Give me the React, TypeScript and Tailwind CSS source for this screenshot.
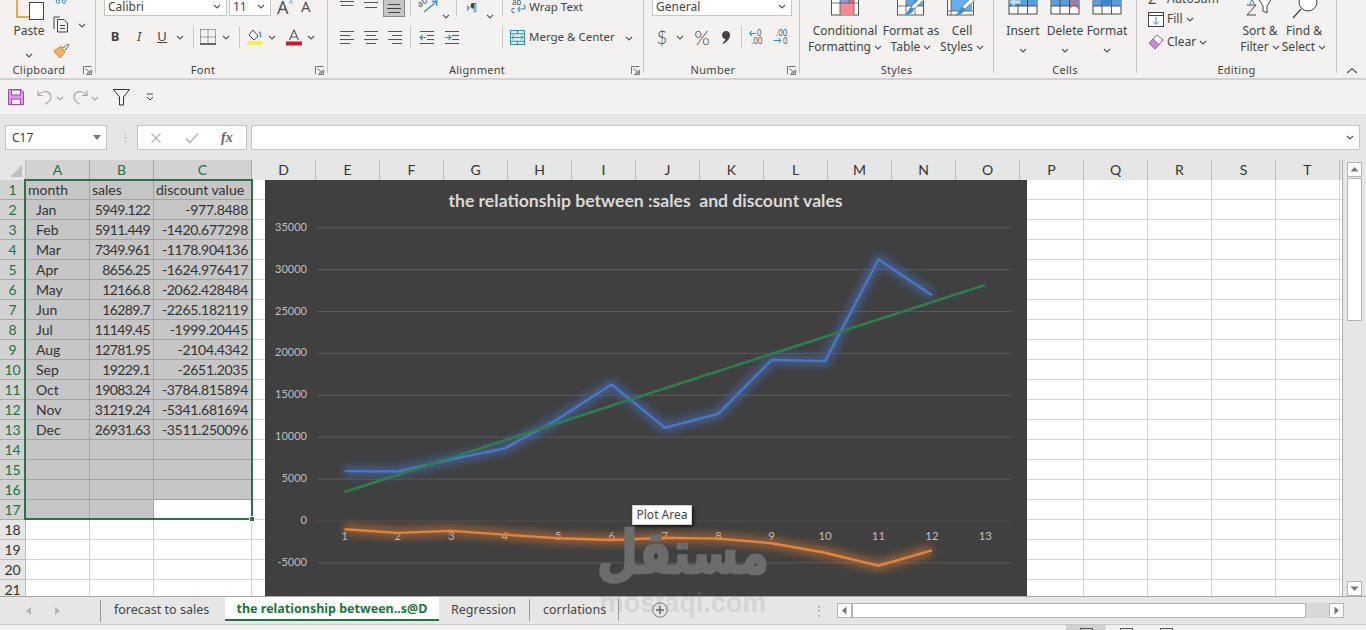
import type { ReactNode } from 'react';

const rows: [string, string, string][] = [
  ['month', 'sales', 'discount value'],
  ['Jan', '5949.122', '-977.8488'],
  ['Feb', '5911.449', '-1420.677298'],
  ['Mar', '7349.961', '-1178.904136'],
  ['Apr', '8656.25', '-1624.976417'],
  ['May', '12166.8', '-2062.428484'],
  ['Jun', '16289.7', '-2265.182119'],
  ['Jul', '11149.45', '-1999.20445'],
  ['Aug', '12781.95', '-2104.4342'],
  ['Sep', '19229.1', '-2651.2035'],
  ['Oct', '19083.24', '-3784.815894'],
  ['Nov', '31219.24', '-5341.681694'],
  ['Dec', '26931.63', '-3511.250096'],
];

const columns = ['D', 'E', 'F', 'G', 'H', 'I', 'J', 'K', 'L', 'M', 'N', 'O', 'P', 'Q', 'R', 'S', 'T'];

const sales = [5949, 5911, 7350, 8656, 12167, 16290, 11149, 12782, 19229, 19083, 31219, 26932];
const discount = [-978, -1421, -1179, -1625, -2062, -2265, -1999, -2104, -2651, -3785, -5342, -3511];

// chart px, relative to chart's top-left corner
const px = (i: number) => 79.5 + i * 53.4;
const py = (v: number) => 341 - v * 0.00838;
const linePoints = (vals: number[]) => vals.map((v, i) => `${px(i)},${py(v)}`).join(' ');

const Slot = ({ className = '', children }: { className?: string; children?: ReactNode }) => (
  <div className={`flex shrink-0 items-center justify-center ${className}`}>{children}</div>
);

const Chev = () => (
  <svg width="8" height="5" viewBox="0 0 8 5" className="inline-block shrink-0">
    <path d="M1 1 L4 4 L7 1" fill="none" stroke="#555" strokeWidth="1.1" />
  </svg>
);

const Sep = () => <div className="h-[22px] w-px bg-[#c8c6c4]" />;

const Launcher = () => (
  <svg width="9" height="9" viewBox="0 0 9 9" className="ml-[5px] mr-[3px] shrink-0">
    <path d="M0.5 8 V0.5 H8.5 M3 8.5 H8.5 V4 M2.5 2.5 L7 7 M7 4 V7 H4" fill="none" stroke="#666" strokeWidth="0.9" />
  </svg>
);

const Group = ({
  className,
  label,
  launcher,
  children,
}: {
  className: string;
  label: string;
  launcher?: boolean;
  children: ReactNode;
}) => (
  <div className={`flex h-[73px] shrink-0 flex-col border-r border-[#c4c4c4] ${className}`}>
    <div className="h-[64px] shrink-0 overflow-hidden">{children}</div>
    <div className="flex h-[12px] shrink-0 items-center text-[11px] leading-[12px] tracking-[0.3px] text-[#444]">
      <span className="flex-1 text-center">{label}</span>
      {launcher && <Launcher />}
    </div>
  </div>
);

const Lines = ({ rowsY, xs }: { rowsY: number[]; xs: [number, number][] }) => (
  <svg width="16" height="15" viewBox="0 0 16 15">
    {rowsY.map((y, i) => (
      <line key={i} x1={xs[i][0]} x2={xs[i][1]} y1={y} y2={y} stroke="#555" strokeWidth="1" />
    ))}
  </svg>
);

const TableIcon = ({ kind }: { kind: 'insert' | 'delete' | 'format' }) => (
  <svg width="30" height="15" viewBox="0 0 30 15">
    <rect x="1" y="-3" width="28" height="17" fill="#fff" stroke="#444" />
    <rect x="1" y="-3" width="28" height="9" fill="#5a9bd8" />
    <path d="M1 6 H29 M10 -3 V14 M19.5 -3 V14" stroke="#444" strokeWidth="0.9" fill="none" />
    {kind === 'insert' && (
      <path d="M1 2 L7 -3 V0 H13 V4 H7 V7 Z" fill="#bfe3f5" stroke="#4aa0d6" strokeWidth="0.9" />
    )}
    {kind === 'delete' && <path d="M19 -2 L29 9 M29 -2 L19 9" stroke="#e0605a" strokeWidth="1.4" />}
    {kind === 'format' && <rect x="10" y="-3" width="9.5" height="9" fill="#3f86cf" />}
  </svg>
);

const Brush = () => (
  <g>
    <path d="M27 -4 L31 -2 L19 9 L16 7 Z" fill="#fff" stroke="#7a7a7a" strokeWidth="0.8" />
    <path d="M16 7 L19 9 C18 13 14 15 9 15 C13 13 13 9 16 7 Z" fill="#3f8fc8" />
  </g>
);

const Clipboard = () => (
  <svg width="30" height="21" viewBox="0 0 30 21">
    <path d="M1 -2 V17 H13" fill="none" stroke="#e8a94e" strokeWidth="2" />
    <rect x="13.5" y="2.5" width="14" height="17" fill="#fff" stroke="#444" />
  </svg>
);

const Ribbon = () => (
  <div className="flex h-[78px] shrink-0 overflow-hidden bg-[#f3f2f1]">
    <Group className="w-[96px]" label="Clipboard" launcher>
      <div className="flex">
        <div className="ml-[11px] flex w-[36px] flex-col items-center">
          <div className="h-[23px] pl-[3px]">
            <Clipboard />
          </div>
          <span className="text-[12px] leading-[16px] text-[#444]">Paste</span>
          <div className="mt-[3px]">
            <Chev />
          </div>
        </div>
        <div className="ml-[6px] flex flex-col">
          <svg width="12" height="5" viewBox="0 0 12 5" className="ml-[2px]">
            <circle cx="3" cy="1.5" r="1.8" fill="none" stroke="#3b8ec2" />
            <circle cx="9" cy="1.5" r="1.8" fill="none" stroke="#3b8ec2" />
          </svg>
          <div className="mt-[7px] flex items-center">
            <svg width="17" height="17" viewBox="0 0 17 17">
              <path d="M1 13 V1 H7 M4.5 3.5 H11 L14.5 7 V16 H4.5 Z M7 9.5 H12 M7 12.5 H12" fill="none" stroke="#444" strokeWidth="1" />
            </svg>
            <div className="ml-[8px]">
              <Chev />
            </div>
          </div>
          <svg width="17" height="16" viewBox="0 0 17 16" className="mt-[7px]">
            <path d="M1 8 L8 3 L12 9 L7 15 C5 13 2 10 1 8 Z" fill="#eeb26c" stroke="#d98a34" />
            <path d="M10 5 L15 1 L16 2.5 L12 7" fill="#fff" stroke="#555" />
          </svg>
        </div>
      </div>
    </Group>

    <Group className="w-[232px]" label="Font" launcher>
      <div className="-mt-[3px] ml-[8px] flex h-[19px] items-center">
        <div className="flex h-[19px] w-[123px] items-center justify-between border border-[#c6c6c6] bg-white pl-[3px] pr-[5px] text-[12px] text-[#444]">
          Calibri <Chev />
        </div>
        <div className="ml-[2px] flex h-[19px] w-[42px] items-center justify-between border border-[#c6c6c6] bg-white pl-[3px] pr-[5px] text-[12px] text-[#444]">
          11 <Chev />
        </div>
        <span className="ml-[6px] text-[18px] leading-none text-[#555]">A</span>
        <span className="-mt-[8px] text-[8px] leading-none text-[#3b8ec2]">^</span>
        <span className="ml-[8px] text-[15px] leading-none text-[#555]">A</span>
        <span className="-mt-[8px] text-[8px] leading-none text-[#3b8ec2]">ˇ</span>
      </div>
      <div className="mt-[12px] flex h-[18px] items-center pl-[7px] text-[#444]">
        <Slot className="w-[24px] text-[13px] font-bold">B</Slot>
        <Slot className="w-[24px] text-[13px] italic">I</Slot>
        <Slot className="w-[22px] text-[13px] underline">U</Slot>
        <Slot className="w-[14px]">
          <Chev />
        </Slot>
        <Slot className="w-[12px]">
          <Sep />
        </Slot>
        <Slot className="w-[18px]">
          <svg width="16" height="16" viewBox="0 0 16 16">
            <path d="M0.5 0.5 H15.5 V15 H0.5 Z M8 0.5 V15 M0.5 8 H15.5" fill="none" stroke="#555" strokeWidth="1" strokeDasharray="1 1" />
            <path d="M0 15 H16" stroke="#222" strokeWidth="1.2" />
          </svg>
        </Slot>
        <Slot className="w-[18px]">
          <Chev />
        </Slot>
        <Slot className="w-[8px]">
          <Sep />
        </Slot>
        <Slot className="w-[22px]">
          <svg width="17" height="16" viewBox="0 0 17 16">
            <path d="M7 1 L12 7 L8 11 L3 6 Z" fill="#fff" stroke="#444" />
            <path d="M13 3 C15 4 15 7 14 8" fill="none" stroke="#3b8ec2" strokeWidth="1.4" />
            <rect x="1" y="12" width="15.5" height="4" fill="#f6ee5a" />
          </svg>
        </Slot>
        <Slot className="w-[14px]">
          <Chev />
        </Slot>
        <Slot className="w-[30px]">
          <svg width="16" height="17" viewBox="0 0 16 17">
            <path d="M3.5 11 L8 1 L12.5 11 M5 8 H11" fill="none" stroke="#555" strokeWidth="1.1" />
            <rect x="0" y="12.5" width="16" height="4" fill="#c01f28" />
          </svg>
        </Slot>
        <Slot className="w-[4px]">
          <Chev />
        </Slot>
      </div>
    </Group>

    <Group className="w-[316px]" label="Alignment" launcher>
      <div className="flex h-[16px] items-start pl-[11px]">
        <Lines rowsY={[1.5, 5.5]} xs={[[1, 15], [2, 14]]} />
        <div className="ml-[8px]">
          <Lines rowsY={[2.5, 7.5]} xs={[[1, 15], [2, 14]]} />
        </div>
        <div className="ml-[4px] -mt-[4px] flex h-[21px] w-[22px] items-end justify-center border border-[#8a8a8a] bg-[#c6c6c6] pb-[2px]">
          <svg width="14" height="11" viewBox="0 0 14 11">
            <path d="M1 1.5 H13 M0 5.5 H14 M1 9.5 H13" stroke="#444" />
          </svg>
        </div>
        <Slot className="ml-[5px] w-px">
          <div className="h-[16px] w-px bg-[#c8c6c4]" />
        </Slot>
        <svg width="22" height="15" viewBox="0 0 22 15" className="ml-[7px]">
          <text x="1" y="6" fontSize="9" fill="#555" transform="rotate(-35 4 6)">ab</text>
          <path d="M6 12 L18 2 M14 1.5 L19 1 L18.5 6" fill="none" stroke="#3b8ec2" strokeWidth="1.3" />
        </svg>
        <div className="ml-[2px] mt-[3px]">
          <Chev />
        </div>
        <Slot className="ml-[6px] w-px">
          <div className="h-[16px] w-px bg-[#c8c6c4]" />
        </Slot>
        <span className="ml-[9px] text-[11px] font-bold leading-[14px] text-[#3b8ec2]">›</span>
        <span className="text-[11px] leading-[14px] text-[#444]">¶</span>
        <div className="ml-[9px] mt-[3px]">
          <Chev />
        </div>
        <Slot className="ml-[8px] w-px">
          <div className="h-[16px] w-px bg-[#c8c6c4]" />
        </Slot>
        <svg width="15" height="14" viewBox="0 0 15 14" className="ml-[8px]">
          <text x="1" y="5" fontSize="8" fill="#555">ab</text>
          <text x="0" y="13" fontSize="8" fill="#555">c</text>
          <path d="M8 9 H12 C15 9 15 5 12 5 M9 6.5 L7 9 L9 12" fill="none" stroke="#3b8ec2" strokeWidth="1.2" />
        </svg>
        <span className="ml-[3px] text-[11.5px] leading-[13px] text-[#444]">Wrap Text</span>
      </div>
      <div className="mt-[12px] flex h-[18px] items-center pl-[11px]">
        <Lines rowsY={[1.5, 5.5, 9.5, 13.5]} xs={[[1, 15], [1, 11], [1, 15], [1, 11]]} />
        <div className="ml-[8px]">
          <Lines rowsY={[1.5, 5.5, 9.5, 13.5]} xs={[[1, 15], [3, 13], [1, 15], [3, 13]]} />
        </div>
        <div className="ml-[8px]">
          <Lines rowsY={[1.5, 5.5, 9.5, 13.5]} xs={[[1, 15], [5, 15], [1, 15], [5, 15]]} />
        </div>
        <Slot className="ml-[7px] w-px">
          <Sep />
        </Slot>
        <svg width="16" height="15" viewBox="0 0 16 15" className="ml-[8px]">
          <path d="M1 1.5 H15 M8 5.5 H15 M8 9.5 H15 M1 13.5 H15" stroke="#555" />
          <path d="M1 7.5 H7 M3.5 5 L1 7.5 L3.5 10" fill="none" stroke="#3b8ec2" strokeWidth="1.1" />
        </svg>
        <svg width="16" height="15" viewBox="0 0 16 15" className="ml-[9px]">
          <path d="M1 1.5 H15 M8 5.5 H15 M8 9.5 H15 M1 13.5 H15" stroke="#555" />
          <path d="M1 7.5 H7 M4.5 5 L7 7.5 L4.5 10" fill="none" stroke="#3b8ec2" strokeWidth="1.1" />
        </svg>
        <Slot className="ml-[42px] w-px">
          <Sep />
        </Slot>
        <svg width="15" height="15" viewBox="0 0 16 16" className="ml-[7px]">
          <rect x="0.5" y="0.5" width="15" height="15" fill="#d8eef2" stroke="#2c8a9a" />
          <path d="M0 4 H16 M0 12 H16 M8 0 V4 M8 12 V16" stroke="#2c8a9a" />
          <path d="M2 8 H14 M4 6 L2 8 L4 10 M12 6 L14 8 L12 10" fill="none" stroke="#2c8a9a" />
        </svg>
        <span className="ml-[4px] text-[11.5px] text-[#444]">Merge &amp; Center</span>
        <div className="ml-[10px]">
          <Chev />
        </div>
      </div>
    </Group>

    <Group className="w-[156px]" label="Number" launcher>
      <div className="-mt-[3px] ml-[8px] flex h-[19px] w-[140px] items-center justify-between border border-[#c6c6c6] bg-white pl-[3px] pr-[5px] text-[12px] text-[#444]">
        General <Chev />
      </div>
      <div className="mt-[12px] flex h-[18px] items-center text-[#444]">
        <Slot className="ml-[10px] w-[16px] text-[18px] font-['Lato',sans-serif] font-light">$</Slot>
        <Slot className="ml-[2px] w-[16px]">
          <Chev />
        </Slot>
        <Slot className="ml-[4px] w-[20px] font-['Lato',sans-serif] text-[20px] font-light">%</Slot>
        <Slot className="ml-[4px] w-[20px]">
          <svg width="8" height="13" viewBox="0 0 8 13">
            <path d="M4 0 C7 0 8 2 8 4 C8 8 5 11 1 13 L0.5 12 C2.5 10.5 3.5 9 3.5 8 C1.5 8 0 6.5 0 4 C0 2 2 0 4 0 Z" fill="#444" />
          </svg>
        </Slot>
        <Slot className="ml-[5px] w-px">
          <Sep />
        </Slot>
        <svg width="17" height="16" viewBox="0 0 17 16" className="ml-[7px]">
          <path d="M1 4.5 H7 M3 2 L0.5 4.5 L3 7" fill="none" stroke="#3b8ec2" />
          <text x="8" y="7" fontSize="8" fill="#555">0</text>
          <text x="2" y="15" fontSize="8" fill="#555">.00</text>
        </svg>
        <svg width="17" height="16" viewBox="0 0 17 16" className="ml-[7px]">
          <text x="3" y="7" fontSize="8" fill="#555">.00</text>
          <path d="M0.5 11.5 H8 M5.5 9 L8 11.5 L5.5 14" fill="none" stroke="#3b8ec2" />
          <text x="10" y="15" fontSize="8" fill="#555">0</text>
        </svg>
      </div>
    </Group>

    <Group className="w-[194px]" label="Styles">
      <div className="flex pl-[11px] text-center text-[12px] leading-[16px] text-[#444]">
        <div className="flex w-[68px] flex-col items-center">
          <svg width="28" height="23" viewBox="0 0 28 23">
            <rect x="0.5" y="-3" width="27" height="18" fill="#fff" stroke="#555" />
            <rect x="9" y="-3" width="9" height="6" fill="#8f9bd6" />
            <rect x="18" y="-3" width="5" height="6" fill="#e86f78" />
            <rect x="9" y="3" width="14" height="12" fill="#f58a93" />
            <path d="M0.5 3 H27.5 M9 -3 V15 M18 -3 V3 M23 -3 V15" stroke="#555" strokeWidth="0.8" fill="none" />
          </svg>
          <span>Conditional</span>
          <span className="whitespace-nowrap">
            Formatting <Chev />
          </span>
        </div>
        <div className="ml-[6px] flex w-[52px] flex-col items-center">
          <svg width="32" height="23" viewBox="0 0 32 23">
            <rect x="2.5" y="-3" width="26" height="18" fill="#fff" stroke="#555" />
            <rect x="11" y="-3" width="17" height="9" fill="#5fa6e4" />
            <path d="M2.5 6 H28 M11 -3 V15 M20 -3 V15" stroke="#555" strokeWidth="0.8" fill="none" />
            <Brush />
          </svg>
          <span className="whitespace-nowrap">Format as</span>
          <span className="whitespace-nowrap">
            Table <Chev />
          </span>
        </div>
        <div className="ml-[5px] flex w-[40px] flex-col items-center">
          <svg width="32" height="23" viewBox="0 0 32 23">
            <rect x="1.5" y="-3" width="26" height="18" fill="#fff" stroke="#555" />
            <rect x="5" y="-3" width="21" height="14" fill="#66aeea" />
            <path d="M1.5 11 H27 M5 -3 V15" stroke="#555" strokeWidth="0.8" fill="none" />
            <Brush />
          </svg>
          <span>Cell</span>
          <span className="whitespace-nowrap">
            Styles <Chev />
          </span>
        </div>
      </div>
    </Group>

    <Group className="w-[143px]" label="Cells">
      <div className="flex pl-[8px] text-center text-[12px] leading-[16px] text-[#444]">
        {(['Insert', 'Delete', 'Format'] as const).map((name) => (
          <div key={name} className="flex w-[42px] flex-col items-center">
            <div className="h-[23px]">
              <TableIcon kind={name.toLowerCase() as 'insert' | 'delete' | 'format'} />
            </div>
            <span>{name}</span>
            <div className="mt-[3px]">
              <Chev />
            </div>
          </div>
        ))}
      </div>
    </Group>

    <Group className="w-[200px]" label="Editing">
      <div className="flex text-[12px] text-[#444]">
        <div className="ml-[11px] flex w-[88px] flex-col">
          <div className="-mt-[9px] flex h-[16px] items-center">
            <span className="w-[18px] text-[14px] leading-none">Σ</span>
            <span className="ml-[1px] leading-[16px]">AutoSum</span>
          </div>
          <div className="mt-[4px] flex h-[16px] items-center">
            <svg width="16" height="15" viewBox="0 0 16 15">
              <rect x="0.5" y="0.5" width="15" height="14" fill="#fff" stroke="#444" />
              <path d="M0 3.5 H16" stroke="#444" />
              <path d="M8 5 V12 M5 9.5 L8 12.5 L11 9.5" fill="none" stroke="#3b8ec2" />
            </svg>
            <span className="ml-[3px] mr-[3px] leading-[16px]">Fill</span>
            <Chev />
          </div>
          <div className="mt-[7px] flex h-[16px] items-center">
            <svg width="16" height="16" viewBox="0 0 16 16">
              <path d="M1 9 L9 1 L15 6 L7 15 Z" fill="#fff" stroke="#a35ab8" />
              <path d="M1 9 L5 5 L11 10.5 L7 15 Z" fill="#c98ad9" stroke="#a35ab8" />
            </svg>
            <span className="ml-[3px] mr-[3px] leading-[16px]">Clear</span>
            <Chev />
          </div>
        </div>
        <div className="flex w-[48px] flex-col items-center text-center leading-[16px]">
          <svg width="30" height="23" viewBox="0 0 30 23">
            <path d="M2 5 H11 L2 15 H11" fill="none" stroke="#444" />
            <path d="M5 4 L7 -1 L9 4" fill="none" stroke="#3b8ec2" />
            <path d="M13 -2 H27 L22 6 V13 L18 11 V6 Z" fill="#fff" stroke="#444" />
          </svg>
          <span className="whitespace-nowrap">Sort &amp;</span>
          <span className="whitespace-nowrap">
            Filter <Chev />
          </span>
        </div>
        <div className="ml-[-4px] flex w-[48px] flex-col items-center text-center leading-[16px]">
          <svg width="30" height="23" viewBox="0 0 30 23">
            <circle cx="19" cy="2" r="9" fill="#fff" stroke="#444" />
            <path d="M12 9 L4 18" stroke="#444" strokeWidth="1.2" />
          </svg>
          <span className="whitespace-nowrap">Find &amp;</span>
          <span className="whitespace-nowrap">
            Select <Chev />
          </span>
        </div>
      </div>
    </Group>

    <div className="flex flex-1 items-end justify-center pb-[4px]">
      <svg width="12" height="7" viewBox="0 0 12 7">
        <path d="M1 6 L6 1.5 L11 6" fill="none" stroke="#555" strokeWidth="1.2" />
      </svg>
    </div>
  </div>
);

const QuickAccess = () => (
  <div className="flex h-[37px] shrink-0 items-center border-t-2 border-b border-t-[#d2d2d2] border-b-[#e0e0e0] bg-[#f3f2f1] pl-[8px]">
    <svg width="16" height="16" viewBox="0 0 16 16">
      <path d="M0.5 0.5 H13 L15.5 3 V15.5 H0.5 Z" fill="#d79ee0" stroke="#a844b8" />
      <rect x="3.5" y="1" width="9" height="5" fill="#f3f2f1" stroke="#a844b8" />
      <rect x="3.5" y="10" width="9" height="5.5" fill="#f3f2f1" stroke="#a844b8" />
    </svg>
    <svg width="16" height="16" viewBox="0 0 16 16" className="ml-[13px]">
      <path d="M1 1.5 V6.5 H6 M1 6.5 C4 2 11 1 13.5 6 C15 9.5 12 13 8.5 15" fill="none" stroke="#a6a6a6" strokeWidth="1.1" />
    </svg>
    <div className="ml-[3px] opacity-50">
      <Chev />
    </div>
    <svg width="16" height="16" viewBox="0 0 16 16" className="ml-[8px]">
      <path d="M15 1.5 V6.5 H10 M15 6.5 C12 2 5 1 2.5 6 C1 9.5 4 13 7.5 15" fill="none" stroke="#a6a6a6" strokeWidth="1.1" />
    </svg>
    <div className="ml-[3px] opacity-50">
      <Chev />
    </div>
    <svg width="17" height="17" viewBox="0 0 17 17" className="ml-[14px]">
      <path d="M0.5 0.5 H16.5 L10.5 8 V16 H6.5 V8 Z" fill="none" stroke="#333" strokeWidth="1" />
    </svg>
    <svg width="8" height="8" viewBox="0 0 8 8" className="ml-[16px]">
      <path d="M1 1 H7 M1 4 L4 7 L7 4" fill="none" stroke="#444" />
    </svg>
  </div>
);

const FormulaBar = () => (
  <div className="flex h-[45px] shrink-0 items-center bg-[#e6e6e6] pl-[5px] pr-[6px]">
    <div className="flex h-[25px] w-[102px] items-center justify-between border border-[#c6c6c6] bg-white pl-[6px] pr-[5px] text-[12px] text-[#444]">
      C17
      <svg width="8" height="5" viewBox="0 0 8 5">
        <path d="M0 0 H8 L4 5 Z" fill="#777" />
      </svg>
    </div>
    <span className="ml-[13px] w-[4px] text-center text-[11px] leading-[8px] text-[#999]">⋮</span>
    <div className="ml-[13px] flex h-[25px] w-[110px] items-center border border-[#c6c6c6] bg-white text-[#b5b5b5]">
      <svg width="12" height="12" viewBox="0 0 12 12" className="ml-[12px]">
        <path d="M1.5 1.5 L10.5 10.5 M10.5 1.5 L1.5 10.5" stroke="#bdbdbd" strokeWidth="1.6" />
      </svg>
      <svg width="14" height="12" viewBox="0 0 14 12" className="ml-[23px]">
        <path d="M1 6.5 L5 10.5 L13 1.5" fill="none" stroke="#bdbdbd" strokeWidth="1.8" />
      </svg>
      <span className="ml-[22px] font-['Liberation_Serif',serif] text-[14px] font-bold italic text-[#666]">fx</span>
    </div>
    <div className="ml-[4px] flex h-[25px] flex-1 items-center justify-end border border-[#c6c6c6] bg-white pr-[5px]">
      <Chev />
    </div>
  </div>
);

const Chart = () => (
  <div className="absolute left-[265px] top-[20px] h-[416px] w-[762px] bg-[#404040]">
    <svg width="762" height="416" viewBox="0 0 762 416" className="block font-['Lato',sans-serif]">
      <defs>
        <filter id="glow" x="-10%" y="-30%" width="120%" height="160%">
          <feGaussianBlur stdDeviation="4" />
        </filter>
      </defs>
      <text x="380.5" y="26.5" textAnchor="middle" fontSize="17.6" fontWeight="700" fill="#d9d9d9" xmlSpace="preserve">
        the relationship between :sales  and discount vales
      </text>
      {[35000, 30000, 25000, 20000, 15000, 10000, 5000, 0, -5000].map((v) => (
        <g key={v}>
          <line x1="52" x2="747" y1={py(v)} y2={py(v)} stroke={v === 0 ? '#4d4d4d' : '#5b5b5b'} strokeWidth="1" />
          <text x="42" y={py(v) + 3} textAnchor="end" fontSize="11" fill="#bfbfbf">
            {v}
          </text>
        </g>
      ))}
      {Array.from({ length: 13 }, (_, i) => (
        <text key={i} x={px(i)} y="360" textAnchor="middle" fontSize="11.5" fill="#bfbfbf">
          {i + 1}
        </text>
      ))}
      <polyline points={linePoints(sales)} fill="none" stroke="#4472c4" strokeOpacity="0.6" strokeWidth="9" filter="url(#glow)" />
      <polyline points={linePoints(sales)} fill="none" stroke="#4a76c4" strokeWidth="2.4" />
      <line x1="79.5" y1="312" x2="720" y2="105" stroke="#2e7d4f" strokeWidth="2.6" />
      <polyline points={linePoints(discount)} fill="none" stroke="#ed7d31" strokeOpacity="0.55" strokeWidth="9" filter="url(#glow)" />
      <polyline points={linePoints(discount)} fill="none" stroke="#e0843f" strokeWidth="2.4" />
    </svg>
    <div className="absolute left-[367px] top-[325px] flex h-[20px] w-[60px] items-center justify-center border border-[#d0d0d0] bg-white text-[12px] text-[#444] shadow-[2px_2px_3px_rgba(0,0,0,0.6)]">
      Plot Area
    </div>
  </div>
);

const Sheet = () => (
  <div className="relative w-[1345px] overflow-hidden border-r border-[#b0b0b0] bg-white">
    <div className="grid grid-cols-[26px_64px_64px_98px_repeat(17,64px)_4px] auto-rows-[20px] font-['Lato',sans-serif] text-[14px] leading-[20px] text-[#333]">
      <div className="flex items-end justify-end border-r border-[#bdbdbd] bg-[#e6e6e6] p-[3px]">
        <svg width="12" height="12" viewBox="0 0 12 12">
          <path d="M12 0 V12 H0 Z" fill="#c0c0c0" />
        </svg>
      </div>
      {['A', 'B', 'C'].map((c) => (
        <div key={c} className="border-r border-b border-[#a8a8a8] bg-[#d2d2d2] text-center text-[#217346]">
          {c}
        </div>
      ))}
      {columns.map((c) => (
        <div key={c} className="border-r border-[#bdbdbd] bg-[#e6e6e6] text-center text-[#333]">
          {c}
        </div>
      ))}
      <div className="bg-[#e6e6e6]" />
      {Array.from({ length: 21 }, (_, r) => {
        const selected = r < 17;
        const data = rows[r];
        const isHead = r === 0;
        const cell = selected ? 'border-r border-b border-[#a3a3a3] bg-[#c6c6c6]' : 'border-r border-b border-[#d4d4d4]';
        return (
          <div key={r} className="contents">
            <div
              className={
                selected
                  ? 'border-r border-b border-[#a8a8a8] bg-[#d2d2d2] text-center text-[#217346]'
                  : 'border-r border-b border-[#bdbdbd] bg-[#e6e6e6] text-center text-[#333]'
              }
            >
              {r + 1}
            </div>
            <div className={`${cell} ${isHead ? 'pl-[2px]' : 'pl-[10px]'} whitespace-nowrap`}>{data?.[0]}</div>
            <div className={`${cell} whitespace-nowrap ${isHead ? 'px-[2px] text-left' : 'px-[3px] text-right tracking-[-0.6px]'}`}>
              {data?.[1]}
            </div>
            <div
              className={`whitespace-nowrap ${isHead ? 'px-[2px] text-left' : 'px-[3px] text-right tracking-[-0.3px]'} ${
                r === 16 ? 'border-r border-b border-[#d4d4d4] bg-white' : cell
              }`}
            >
              {data?.[2]}
            </div>
            {columns.map((c) => (
              <div key={c} className="border-r border-b border-[#d4d4d4]" />
            ))}
            <div className="border-b border-[#d4d4d4]" />
          </div>
        );
      })}
    </div>
    <div className="absolute left-[24px] top-[19px] h-[341px] w-[229px] border-2 border-[#2f6f4f]">
      <div className="absolute -bottom-[4px] -right-[4px] h-[6px] w-[6px] border border-white bg-[#2f6f4f]" />
    </div>
    <Chart />
  </div>
);

const ScrollBtn = ({ d, className = '' }: { d: string; className?: string }) => (
  <div className={`flex h-[15px] w-[15px] shrink-0 items-center justify-center border border-[#b5b5b5] bg-white ${className}`}>
    <svg width="9" height="9" viewBox="0 0 9 9">
      <path d={d} fill="#777" />
    </svg>
  </div>
);

const VScroll = () => (
  <div className="flex flex-1 flex-col items-center bg-[#e6e6e6] px-[4px] pt-[2px]">
    <ScrollBtn d="M0.5 6.5 L4.5 2 L8.5 6.5 Z" />
    <div className="mt-px h-[143px] w-[15px] border border-[#b5b5b5] bg-white" />
    <div className="flex-1" />
    <ScrollBtn d="M0.5 2.5 L4.5 7 L8.5 2.5 Z" />
  </div>
);

const Tabs = () => (
  <div className="flex h-[28px] shrink-0 border-t border-[#a8a8a8] bg-[#e6e6e6] text-[12.5px] text-[#444]">
    <div className="mt-[3px] flex h-[22px] w-[101px] shrink-0 items-center border-r border-[#9a9a9a] pl-[26px]">
      <svg width="5" height="8" viewBox="0 0 5 8">
        <path d="M5 0 V8 L0 4 Z" fill="#b5b5b5" />
      </svg>
      <svg width="5" height="8" viewBox="0 0 5 8" className="ml-[24px]">
        <path d="M0 0 V8 L5 4 Z" fill="#b5b5b5" />
      </svg>
    </div>
    <div className="mt-[2px] flex h-[22px] w-[124px] items-center pl-[13px]">forecast to sales</div>
    <div className="flex h-[24px] w-[214px] items-center justify-center border-b-2 border-[#217346] bg-white pt-[2px] font-bold text-[#217346]">
      the relationship between..s@D
    </div>
    <div className="mt-[2px] flex h-[22px] w-[91px] items-center border-r border-[#9a9a9a] pl-[12px]">Regression</div>
    <div className="mt-[2px] flex h-[22px] w-[89px] items-center border-r border-[#9a9a9a] pl-[13px]">corrlations</div>
    <svg width="16" height="16" viewBox="0 0 16 16" className="ml-[33px] mt-[5px]">
      <circle cx="8" cy="8" r="7.2" fill="none" stroke="#777" />
      <path d="M4 8 H12 M8 4 V12" stroke="#666" strokeWidth="1.6" />
    </svg>
    <span className="ml-[145px] mt-[3px] w-[6px] text-center text-[12px] leading-[22px] text-[#999]">⋮</span>
    <div className="ml-[18px] mt-[6px] flex h-[15px] w-[507px] items-center bg-[#d8d8d8]">
      <ScrollBtn d="M6.5 0.5 L2 4.5 L6.5 8.5 Z" />
      <div className="h-[15px] w-[454px] border border-[#b5b5b5] bg-white" />
      <div className="flex-1" />
      <ScrollBtn d="M2.5 0.5 L7 4.5 L2.5 8.5 Z" />
    </div>
  </div>
);

const StatusBar = () => (
  <div className="flex h-[6px] shrink-0 items-start overflow-hidden border-t border-[#c8c8c8] bg-[#f3f2f1] pl-[1066px]">
    <div className="flex h-[6px] w-[40px] justify-center bg-[#d2d2d2] pt-[3px]">
      <div className="h-[6px] w-[13px] border border-[#555]" />
    </div>
    <div className="flex h-[6px] w-[40px] justify-center pt-[3px]">
      <div className="h-[6px] w-[13px] border border-[#555]" />
    </div>
    <div className="flex h-[6px] w-[40px] justify-center pt-[3px]">
      <div className="h-[6px] w-[13px] border border-[#555]" />
    </div>
  </div>
);

export default function App() {
  return (
    <div className="relative flex h-[630px] w-[1366px] flex-col overflow-hidden bg-[#e6e6e6] font-['Noto_Sans',sans-serif]">
      <Ribbon />
      <QuickAccess />
      <FormulaBar />
      <div className="flex h-[436px] shrink-0">
        <Sheet />
        <VScroll />
      </div>
      <Tabs />
      <StatusBar />
      {/* site watermark over the screenshot */}
      <div className="pointer-events-none absolute left-[590px] top-[530px] flex w-[186px] flex-col items-center">
        <span className="origin-bottom scale-y-[1.25] font-['DejaVu_Sans',sans-serif] text-[47px] font-bold leading-[62px] text-[#6c6c6c] [-webkit-text-stroke:2px_#6c6c6c]">
          مستقل
        </span>
        <span className="-mt-[2px] font-['Liberation_Sans',sans-serif] text-[27px] font-bold leading-[27px] text-[#8c8c8c]/20">
          mostaql.com
        </span>
      </div>
    </div>
  );
}
